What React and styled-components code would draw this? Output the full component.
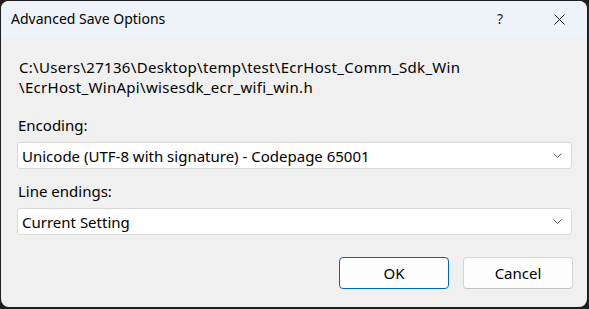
import React from "react";
import styled, { createGlobalStyle } from "styled-components";

const Global = createGlobalStyle`
  html, body { margin: 0; padding: 0; background: #1f1f1f; }
  body { width: 589px; height: 309px; overflow: hidden; }
  * { box-sizing: border-box; }
`;

const FONT = `"Noto Sans", "Open Sans", sans-serif`;

const Window = styled.div`
  margin: 1px 2px 2px 1px;
  width: 586px;
  height: 306px;
  border-radius: 8px;
  overflow: hidden;
  background: #f0f0f0;
  display: flex;
  flex-direction: column;
  font-family: ${FONT};
  font-size: 15px;
  color: #000;
`;

const TitleBar = styled.div`
  height: 36px;
  background: #eef2f9;
  display: flex;
  align-items: center;
  padding-left: 10px;
`;

const Title = styled.div`
  flex: 1;
  font-size: 14px;
  line-height: 20px;
  margin-top: -1px;
`;

const CaptionButton = styled.div`
  width: ${(p) => p.$w}px;
  height: 36px;
  display: flex;
  align-items: center;
  justify-content: center;
  line-height: 20px;
  font-size: 14px;
  color: #1a1a1a;
`;

const Content = styled.div`
  flex: 1;
  display: flex;
  flex-direction: column;
  padding: 20px 15px 0 16px;
`;

const PathText = styled.div`
  line-height: 20px;
  padding-left: 2px;
  letter-spacing: 0.3px;
`;

const Label = styled.div`
  line-height: 20px;
  margin-top: ${(p) => p.$mt}px;
  padding-left: 1px;
`;

const Select = styled.div`
  margin-top: ${(p) => p.$mt}px;
  height: 27px;
  background: #ffffff;
  border: 1px solid #d9d9d9;
  border-radius: 3px;
  display: flex;
  align-items: center;
  padding: 0 9px 0 4px;
  line-height: 20px;
`;

const SelectValue = styled.div`
  flex: 1;
  margin-top: 1px;
`;

const Footer = styled.div`
  margin-top: 22px;
  display: flex;
  justify-content: flex-end;
  gap: 14px;
  margin-right: -1px;
`;

const Button = styled.div`
  width: 110px;
  height: 32px;
  border-radius: 4px;
  background: #fdfdfd;
  border: 1px solid ${(p) => (p.$primary ? "#0067c0" : "#d5d5d5")};
  border-bottom-color: ${(p) => (p.$primary ? "#0067c0" : "#c4c4c4")};
  display: flex;
  align-items: center;
  justify-content: center;
  line-height: 20px;
`;

const Chevron = () => (
  <svg width="9" height="5" viewBox="0 0 9 5" fill="none">
    <path d="M0.5 0.5 L4.5 4.5 L8.5 0.5" stroke="#606060" strokeWidth="1" />
  </svg>
);

const CloseIcon = () => (
  <svg width="11" height="11" viewBox="0 0 11 11" fill="none">
    <path d="M0.5 0.5 L10.5 10.5 M10.5 0.5 L0.5 10.5" stroke="#1a1a1a" strokeWidth="1" />
  </svg>
);

export default function App() {
  return (
    <>
      <Global />
      <Window>
        <TitleBar>
          <Title>Advanced Save Options</Title>
          <CaptionButton $w={62}>?</CaptionButton>
          <CaptionButton $w={56}>
            <CloseIcon />
          </CaptionButton>
        </TitleBar>
        <Content>
          <PathText>
            C:\Users\27136\Desktop\temp\test\EcrHost_Comm_Sdk_Win
            <br />
            \EcrHost_WinApi\wisesdk_ecr_wifi_win.h
          </PathText>
          <Label $mt={18}>Encoding:</Label>
          <Select $mt={7}>
            <SelectValue>Unicode (UTF-8 with signature) - Codepage 65001</SelectValue>
            <Chevron />
          </Select>
          <Label $mt={12}>Line endings:</Label>
          <Select $mt={7}>
            <SelectValue>Current Setting</SelectValue>
            <Chevron />
          </Select>
          <Footer>
            <Button $primary>OK</Button>
            <Button>Cancel</Button>
          </Footer>
        </Content>
      </Window>
    </>
  );
}
